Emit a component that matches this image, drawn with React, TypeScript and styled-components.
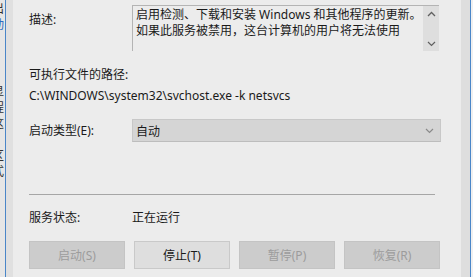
import React from "react";
import styled, { createGlobalStyle } from "styled-components";

const Global = createGlobalStyle`
  html, body { margin: 0; padding: 0; background: #ececec; }
  body { font-family: "Noto Sans", "Noto Sans CJK SC", sans-serif; }
`;

const Screen = styled.div`
  width: 473px;
  height: 277px;
  display: flex;
  overflow: hidden;
  font-family: "Noto Sans", "Noto Sans CJK SC", sans-serif;
  font-size: 12px;
  color: #1a1a1a;
`;

const BackEdge = styled.div`
  width: 5px;
  background: #e6e6e6;
  border-right: 1px solid #4a86c8;
  overflow: hidden;
  display: flex;
  flex-direction: column;
  flex-shrink: 0;
`;

const EdgeChar = styled.span<{ $blue?: boolean; $top: number }>`
  display: block;
  margin-left: -8px;
  margin-top: ${(p) => p.$top}px;
  font-family: "Noto Sans CJK SC", sans-serif;
  font-size: 12px;
  line-height: 15px;
  height: 15px;
  overflow: hidden;
  color: ${(p) => (p.$blue ? "#2a6bc0" : "#333")};
`;

const Gutter = styled.div`
  width: 7px;
  background: #e0e0e0;
  flex-shrink: 0;
`;

const Panel = styled.div`
  flex: 1;
  background: #ececec;
  padding: 5px 20px 0 16px;
  display: flex;
  flex-direction: column;
`;

const RightGutter = styled.div`
  width: 9px;
  background: #dedede;
  border-right: 1px solid #4a86c8;
  flex-shrink: 0;
`;

const RightRest = styled.div`
  width: 2px;
  background: #f0f0f0;
  flex-shrink: 0;
`;

const Row = styled.div<{ $mt?: number; $align?: string }>`
  display: flex;
  align-items: ${(p) => p.$align || "flex-start"};
  margin-top: ${(p) => p.$mt || 0}px;
`;

const Label = styled.div<{ $mt?: number }>`
  width: 103px;
  flex-shrink: 0;
  line-height: 16px;
  margin-top: ${(p) => p.$mt || 0}px;
  white-space: nowrap;
`;

const Text = styled.div<{ $mt?: number }>`
  line-height: 16px;
  margin-top: ${(p) => p.$mt || 0}px;
  white-space: nowrap;
`;

const TextBox = styled.div`
  width: 307px;
  height: 46px;
  box-sizing: border-box;
  border-top: 1px solid #b4b4b4;
  border-left: 1px solid #b4b4b4;
  display: flex;
  overflow: hidden;
`;

const TextContent = styled.div`
  flex: 1;
  padding: 1px 0 0 3px;
  line-height: 16px;
  white-space: nowrap;
`;

const ScrollBar = styled.div`
  width: 16px;
  background: #dedede;
  display: flex;
  flex-direction: column;
  justify-content: space-between;
  align-items: center;
  padding: 5px 0 4px;
`;

const Chevron = styled.svg`
  display: block;
`;

const Select = styled.div`
  width: 309px;
  height: 23px;
  box-sizing: border-box;
  background: #d5d5d5;
  border: 1px solid #c8c8c8;
  border-bottom-color: #bdbdbd;
  display: flex;
  align-items: center;
  justify-content: space-between;
  padding: 0 6px 0 3px;
`;

const Separator = styled.div`
  width: 406px;
  height: 1px;
  background: #a6a6a6;
  margin-top: 52px;
`;

const Buttons = styled.div`
  display: grid;
  grid-template-columns: repeat(4, 96px);
  column-gap: 9px;
  margin-top: 15px;
`;

const Button = styled.div<{ $disabled?: boolean }>`
  height: 28px;
  box-sizing: border-box;
  display: flex;
  align-items: center;
  justify-content: center;
  background: ${(p) => (p.$disabled ? "#cccccc" : "#dedede")};
  border: 1px solid ${(p) => (p.$disabled ? "#c4c4c4" : "#c9c9c9")};
  color: ${(p) => (p.$disabled ? "#9c9c9c" : "#1a1a1a")};
`;

const Up = () => (
  <Chevron width="9" height="6" viewBox="0 0 9 6">
    <path d="M1 5 L4.5 1.5 L8 5" fill="none" stroke="#606060" strokeWidth="1.3" />
  </Chevron>
);
const Down = ({ color = "#606060" }: { color?: string }) => (
  <Chevron width="9" height="6" viewBox="0 0 9 6">
    <path d="M1 1 L4.5 4.5 L8 1" fill="none" stroke={color} strokeWidth="1.2" />
  </Chevron>
);

export default function App() {
  return (
    <>
      <Global />
      <Screen>
        <BackEdge>
          <EdgeChar $top={0}>出</EdgeChar>
          <EdgeChar $top={1} $blue>动</EdgeChar>
          <EdgeChar $top={52}>显</EdgeChar>
          <EdgeChar $top={1}>程</EdgeChar>
          <EdgeChar $top={1}>这</EdgeChar>
          <EdgeChar $top={1}>c</EdgeChar>
          <EdgeChar $top={1}>区</EdgeChar>
          <EdgeChar $top={1}>式</EdgeChar>
        </BackEdge>
        <Gutter />
        <Panel>
          <Row>
            <Label $mt={7}>描述:</Label>
            <TextBox>
              <TextContent>
                启用检测、下载和安装 Windows 和其他程序的更新。
                <br />
                如果此服务被禁用，这台计算机的用户将无法使用
              </TextContent>
              <ScrollBar>
                <Up />
                <Down />
              </ScrollBar>
            </TextBox>
          </Row>
          <Text $mt={16}>可执行文件的路径:</Text>
          <Text $mt={5}>C:\WINDOWS\system32\svchost.exe -k netsvcs</Text>
          <Row $mt={15} $align="center">
            <Label>启动类型(E):</Label>
            <Select>
              <span>自动</span>
              <Down color="#8a8a8a" />
            </Select>
          </Row>
          <Separator />
          <Row $mt={15}>
            <Label>服务状态:</Label>
            <Text>正在运行</Text>
          </Row>
          <Buttons>
            <Button $disabled>启动(S)</Button>
            <Button>停止(T)</Button>
            <Button $disabled>暂停(P)</Button>
            <Button $disabled>恢复(R)</Button>
          </Buttons>
        </Panel>
        <RightGutter />
        <RightRest />
      </Screen>
    </>
  );
}
